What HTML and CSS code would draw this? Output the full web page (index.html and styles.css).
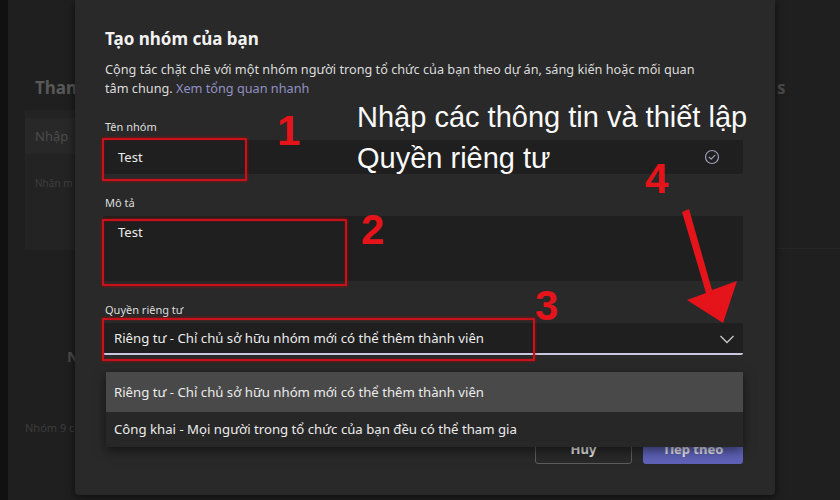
FILE: index.html
```html
<!DOCTYPE html>
<html lang="vi">
<head>
    <meta charset="UTF-8">
    <meta name="viewport" content="width=device-width, initial-scale=1.0">
    <title>Tạo nhóm của bạn</title>
    <link rel="stylesheet" href="styles.css">
</head>
<body>
    <div class="app">
        <aside class="rail"></aside>

        <!-- Trang phía sau hộp thoại -->
        <main class="page">
            <div class="page-left">
                <h3 class="page-title">Than</h3>
                <div class="page-card">
                    <div class="page-input">Nhập</div>
                    <div class="page-hint">Nhân m</div>
                </div>
                <div class="page-section">N</div>
                <div class="page-note">Nhóm 9 c</div>
            </div>
            <div class="page-right">
                <h3 class="page-title">s</h3>
                <div class="page-rule"></div>
            </div>
        </main>
    </div>

    <!-- Hộp thoại -->
    <div class="dialog">
        <h2 class="dialog-title">Tạo nhóm của bạn</h2>
        <p class="dialog-desc">
            Cộng tác chặt chẽ với một nhóm người trong tổ chức của bạn theo dự án, sáng kiến hoặc mối quan<br>
            tâm chung. <a class="link" href="#">Xem tổng quan nhanh</a>
        </p>

        <label class="field-label">Tên nhóm</label>
        <div class="field field-input">
            <span>Test</span>
            <svg class="check-icon" width="16" height="16" viewBox="0 0 16 16">
                <circle cx="8" cy="8" r="6.5" fill="none" stroke="#9c9cba" stroke-width="1.2"/>
                <path d="M5.2 8.2l2 1.9 3.6-3.8" fill="none" stroke="#9c9cba" stroke-width="1.2" stroke-linecap="round" stroke-linejoin="round"/>
            </svg>
        </div>

        <label class="field-label">Mô tả</label>
        <div class="field field-area">Test</div>

        <label class="field-label">Quyền riêng tư</label>
        <div class="field field-select">
            <span class="select-value">Riêng tư - Chỉ chủ sở hữu nhóm mới có thể thêm thành viên</span>
            <svg class="chevron" width="16" height="10" viewBox="0 0 16 10">
                <path d="M1.5 2l6.5 6.5 6.5-6.5" fill="none" stroke="#c8c8c8" stroke-width="1.3"/>
            </svg>
        </div>

        <div class="actions">
            <button class="btn btn-ghost">Hủy</button>
            <button class="btn btn-primary">Tiếp theo</button>
        </div>

        <ul class="dropdown">
            <li class="dropdown-item selected">Riêng tư - Chỉ chủ sở hữu nhóm mới có thể thêm thành viên</li>
            <li class="dropdown-item">Công khai - Mọi người trong tổ chức của bạn đều có thể tham gia</li>
        </ul>
    </div>

    <!-- Chú thích -->
    <div class="mark mark-1"></div>
    <div class="mark mark-2"></div>
    <div class="mark mark-3"></div>
    <span class="num num-1">1</span>
    <span class="num num-2">2</span>
    <span class="num num-3">3</span>
    <span class="num num-4">4</span>
    <p class="caption">Nhập các thông tin và thiết lập<br>Quyền riêng tư</p>
    <svg class="arrow" width="840" height="500" viewBox="0 0 840 500">
        <path d="M682 212 L689 209 L712 290 L737 281 L723 323 L687 300 L706 293 Z" fill="#e5141b"/>
    </svg>
</body>
</html>
```

FILE: styles.css
```css
* {
    margin: 0;
    padding: 0;
    box-sizing: border-box;
}

body {
    width: 840px;
    height: 500px;
    overflow: hidden;
    background: #1d1d1d;
    font-family: 'Noto Sans', 'Open Sans', sans-serif;
    color: #e6e6e6;
    position: relative;
}

.app {
    display: flex;
    height: 100%;
}

.rail {
    width: 8px;
    background: #111;
}

.page {
    flex: 1;
    display: flex;
    justify-content: space-between;
    background: #1f1f1f;
}

.page-left {
    width: 67px;
    padding: 78px 0 0 17px;
    overflow: hidden;
    white-space: nowrap;
}

.page-title {
    font-size: 17px;
    font-weight: 700;
    color: #585858;
    line-height: 20px;
    padding-left: 10px;
}

.page-card {
    margin-top: 12px;
    background: #232323;
    height: 140px;
    padding-top: 8px;
}

.page-input {
    background: #282828;
    height: 36px;
    line-height: 36px;
    padding-left: 10px;
    font-size: 13px;
    color: #4c4c4c;
}

.page-hint {
    margin-top: 22px;
    padding-left: 10px;
    font-size: 10px;
    color: #3e3e3e;
}

.page-section {
    margin-top: 96px;
    padding-left: 42px;
    font-size: 15px;
    font-weight: 700;
    color: #4a4a4a;
}

.page-note {
    margin-top: 54px;
    font-size: 11px;
    color: #3c3c3c;
}

.page-right {
    width: 65px;
    padding: 78px 0 0 2px;
    overflow: hidden;
}

.page-right .page-title {
    padding-left: 0;
    color: #4a4a4a;
}

.page-rule {
    margin-top: 150px;
    height: 1px;
    background: #262626;
}

/* hộp thoại */

.dialog {
    position: absolute;
    left: 75px;
    top: 0;
    width: 700px;
    height: 495px;
    background: #292929;
    border-radius: 0 0 4px 4px;
    box-shadow: 0 2px 8px rgba(0, 0, 0, 0.6);
    padding: 28px 32px 0 30px;
}

.dialog-title {
    font-size: 17px;
    font-weight: 700;
    line-height: 22px;
    color: #f2f2f2;
}

.dialog-desc {
    margin-top: 10px;
    font-size: 12.7px;
    line-height: 19px;
    color: #dcdcdc;
}

.link {
    color: #9190c4;
    text-decoration: none;
}

.field-label {
    display: block;
    font-size: 11px;
    line-height: 16px;
    color: #dedede;
    margin-top: 21px;
    margin-bottom: 5px;
}

.field {
    margin-left: -2px;
    background: #1f1f1f;
    border-radius: 2px;
    font-size: 13px;
    color: #ececec;
}

.field-input {
    height: 34px;
    display: flex;
    align-items: center;
    justify-content: space-between;
    padding: 0 23px 0 15px;
}

.field-area {
    height: 65px;
    padding: 7px 15px;
    line-height: 18px;
}

.field-select {
    height: 32px;
    display: flex;
    align-items: center;
    justify-content: space-between;
    padding: 0 8px 0 11px;
    border-bottom: 2px solid #c9c8e0;
}

.select-value {
    font-size: 13.2px;
}

.chevron {
    margin-top: 2px;
}

.actions {
    display: flex;
    justify-content: flex-end;
    gap: 11px;
    margin-top: 78px;
}

.btn {
    height: 31px;
    font-family: inherit;
    font-size: 13px;
    font-weight: 700;
    border-radius: 3px;
    color: #e8e8e8;
}

.btn-ghost {
    width: 97px;
    background: transparent;
    border: 1px solid #5c5c5c;
}

.btn-primary {
    width: 100px;
    background: #5e61b6;
    border: none;
}

.dropdown {
    position: absolute;
    left: 31px;
    right: 32px;
    top: 372px;
    list-style: none;
    background: #272727;
    box-shadow: 0 4px 10px rgba(0, 0, 0, 0.5);
    font-size: 13.2px;
    color: #ececec;
}

.dropdown-item {
    height: 35px;
    line-height: 35px;
    padding-left: 8px;
}

.dropdown-item.selected {
    height: 40px;
    line-height: 40px;
    background: #4a4949;
}

/* chú thích */

.mark {
    position: absolute;
    border: 2px solid #c9111b;
    box-shadow: 0 0 3px rgba(200, 0, 0, 0.7), inset 0 0 2px rgba(200, 0, 0, 0.5);
}

.mark-1 { left: 102px; top: 138px; width: 145px; height: 43px; }
.mark-2 { left: 102px; top: 219px; width: 245px; height: 67px; }
.mark-3 { left: 102px; top: 318px; width: 433px; height: 43px; }

.num {
    position: absolute;
    font-family: 'Liberation Sans', sans-serif;
    font-weight: 700;
    font-size: 42px;
    line-height: 42px;
    color: #e5141b;
}

.num-1 { left: 277px; top: 110px; }
.num-2 { left: 361px; top: 209px; }
.num-3 { left: 535px; top: 285px; }
.num-4 { left: 645px; top: 158px; }

.caption {
    position: absolute;
    left: 357px;
    top: 97px;
    font-family: 'Liberation Sans', sans-serif;
    font-size: 29px;
    line-height: 41px;
    color: #fafafa;
}

.arrow {
    position: absolute;
    left: 0;
    top: 0;
}
```
